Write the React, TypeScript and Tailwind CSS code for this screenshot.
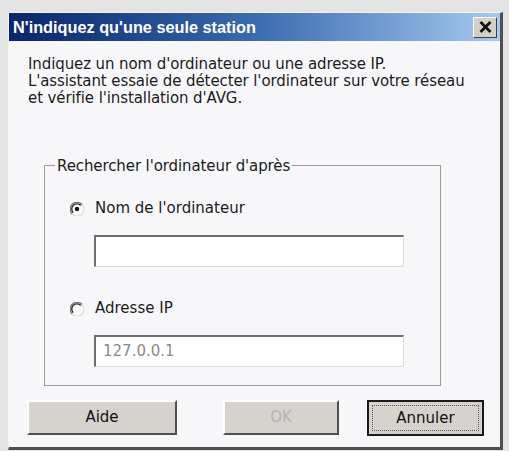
import React from "react";

const body = { fontFamily: '"DejaVu Sans", Verdana, sans-serif' };
const title = { fontFamily: '"Liberation Sans", Arial, sans-serif' };

const Radio = ({ checked }: { checked?: boolean }) => (
  <svg width="14" height="14" viewBox="0 0 14 14" className="shrink-0">
    <circle cx="7" cy="7" r="6.4" fill="#fcfcfc" />
    <path d="M12 2.5 A6.4 6.4 0 0 0 2 11.9" fill="none" stroke="#7a7a7a" strokeWidth="1.4" />
    <path d="M10.8 3.5 A5 5 0 0 0 3.2 10.8" fill="none" stroke="#2a2a2a" strokeWidth="1.4" />
    <path d="M2 11.9 A6.4 6.4 0 0 0 12 2.5" fill="none" stroke="#dcdcdc" strokeWidth="1.2" />
    {checked && <circle cx="7" cy="7" r="2.2" fill="#111" />}
  </svg>
);

const Field = ({ value }: { value?: string }) => (
  <div className="ml-[49px] flex h-[32px] w-[310px] items-center border-t-2 border-l-2 border-r border-b border-t-[#6e6e6e] border-l-[#6e6e6e] border-r-[#dcdcdc] border-b-[#dcdcdc] bg-white pl-[7px] text-[15px] text-[#8a8a8a]">
    {value}
  </div>
);

export default function App() {
  return (
    <div className="h-[451px] w-[509px] overflow-hidden bg-[#e4e4e4] pl-[8px] pt-[12px]" style={body}>
      <div className="flex h-[438px] w-[495px] flex-col border-t border-l border-r-[3px] border-b-[3px] border-t-[#f4f4f4] border-l-[#f4f4f4] border-r-[#4e4e4e] border-b-[#4e4e4e] bg-[#f7f7f9]">
        {/* title bar */}
        <div className="flex h-[28px] items-center justify-between bg-gradient-to-r from-[#0a246a] via-[#3a6bb0] to-[#a6caf0] pl-[4px] pr-[3px]">
          <span className="text-[16.3px] font-bold text-white" style={title}>
            N'indiquez qu'une seule station
          </span>
          <div className="flex h-[21px] w-[24px] items-center justify-center border border-t-white border-l-white border-r-[#404040] border-b-[#404040] bg-[#d4d0c8]">
            <svg width="13" height="12" viewBox="0 0 13 12">
              <path d="M1.5 1 L11.5 11 M11.5 1 L1.5 11" stroke="#111" strokeWidth="2.8" />
            </svg>
          </div>
        </div>

        {/* body */}
        <div className="flex flex-1 flex-col pl-[19px] pt-[15px] text-[15px] leading-[17px] text-[#1c1c1c]">
          <p className="tracking-[-0.1px]">
            Indiquez un nom d'ordinateur ou une adresse IP.
            <br />
            L'assistant essaie de détecter l'ordinateur sur votre réseau
            <br />
            et vérifie l'installation d'AVG.
          </p>

          <fieldset className="ml-[16px] mt-[48px] w-[397px] border border-[#9c9c9c] pb-[18px]">
            <legend className="ml-[10px] px-[2px] pt-[3px] tracking-[-0.1px]">Rechercher l'ordinateur d'après</legend>

            <div className="ml-[25px] mt-[25px] flex items-center gap-[11px]">
              <Radio checked />
              <span>Nom de l'ordinateur</span>
            </div>
            <div className="mt-[18px]">
              <Field />
            </div>

            <div className="ml-[25px] mt-[33px] flex items-center gap-[11px]">
              <Radio />
              <span>Adresse IP</span>
            </div>
            <div className="mt-[18px]">
              <Field value="127.0.0.1" />
            </div>
          </fieldset>

          <div className="-ml-[1px] mt-[14px] flex text-[15px]">
            <button className="flex h-[35px] w-[150px] items-center justify-center border-2 border-t-white border-l-white border-r-[#505050] border-b-[#505050] bg-[#d6d3ce] text-[#111]">
              Aide
            </button>
            <button className="ml-[46px] flex h-[35px] w-[116px] items-center justify-center border-2 border-t-white border-l-white border-r-[#505050] border-b-[#505050] bg-[#d6d3ce] text-[#b4b4b4]">
              OK
            </button>
            <div className="ml-[28px] h-[36px] w-[117px] border-2 border-[#1a1a1a] bg-[#d6d3ce] p-[3px]">
              <div className="flex h-full w-full items-center justify-center border border-dotted border-[#555] text-[#111]">
                Annuler
              </div>
            </div>
          </div>
        </div>
      </div>
    </div>
  );
}
